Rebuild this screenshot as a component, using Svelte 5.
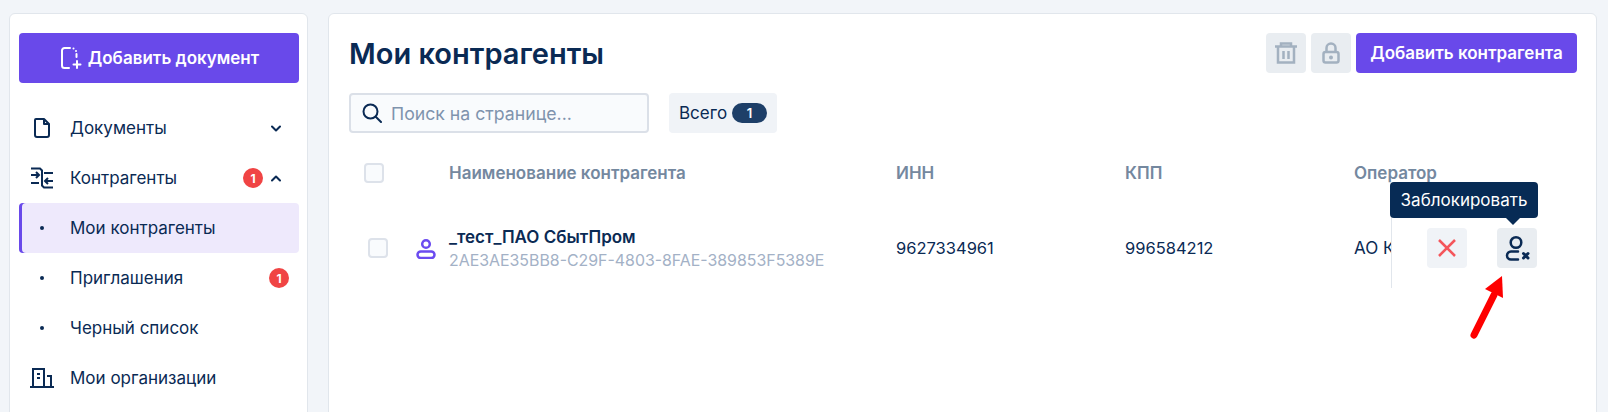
<script>
  let menu = [
    { label: 'Документы', icon: 'doc', chevron: 'down' },
    { label: 'Контрагенты', icon: 'swap', chevron: 'up', badge: 1 },
    { label: 'Мои контрагенты', active: true },
    { label: 'Приглашения', badge: 1 },
    { label: 'Черный список' },
    { label: 'Мои организации', icon: 'building' }
  ];
</script>

<div class="page">
  <aside class="sidebar">
    <button class="add-doc">
      <svg width="24" height="26" viewBox="0 0 24 26" fill="none" stroke="currentColor" stroke-width="2" stroke-linecap="round" stroke-linejoin="round">
        <path d="M10 23H5.500A2.500 2.500 0 0 1 3 20.500V5.500A2.500 2.500 0 0 1 5.500 3H11" />
        <path d="M14.500 3.500h.01M17 6h.01M17.500 9v3" />
        <path d="M18 16v7M14.500 19.500h7" />
      </svg>
      Добавить документ
    </button>
    <nav class="menu">
      {#each menu as item}
        <div class="item" class:active={item.active}>
          <span class="item-icon">
            {#if item.icon === 'doc'}
              <svg width="18" height="22" viewBox="0 0 18 22" fill="none" stroke="#0a2a54" stroke-width="2" stroke-linejoin="round">
                <path d="M3 2h8l5 5v11a2 2 0 0 1-2 2H4a2 2 0 0 1-2-2V3a1 1 0 0 1 1-1z" />
                <path d="M11 2v5h5" />
              </svg>
            {:else if item.icon === 'swap'}
              <svg width="22" height="22" viewBox="0 0 22 22" fill="none" stroke="#0a2a54" stroke-width="2">
                <path d="M0 1.500h9l2 2v15l2 2h9M13 6h9" />
                <path d="M0 8h8M5 5l3 3-3 3M0 16h8" />
                <path d="M22 14h-8M17 11l-3 3 3 3" />
              </svg>
            {:else if item.icon === 'building'}
              <svg width="24" height="22" viewBox="0 0 24 22" fill="none" stroke="#0a2a54" stroke-width="2">
                <path d="M0 20h24M3 20V2h11v18M17 9h4v11" />
                <path d="M7 7h3M7 11h3" />
              </svg>
            {:else}
              <span class="dot"></span>
            {/if}
          </span>
          <span class="item-label">{item.label}</span>
          {#if item.badge}
            <span class="badge">{item.badge}</span>
          {/if}
          {#if item.chevron}
            <svg class="chevron" width="10" height="7" viewBox="0 0 10 7" fill="none" stroke="#0a2a54" stroke-width="2" stroke-linecap="round" stroke-linejoin="round">
              {#if item.chevron === 'down'}
                <path d="M1 1.500l4 4 4-4" />
              {:else}
                <path d="M1 5.500l4-4 4 4" />
              {/if}
            </svg>
          {/if}
        </div>
      {/each}
    </nav>
  </aside>

  <main class="content">
    <header class="top">
      <h1>Мои контрагенты</h1>
      <div class="top-actions">
        <button class="icon-btn">
          <svg width="22" height="22" viewBox="0 0 22 22" fill="none" stroke="#a3b1c0" stroke-width="2.500">
            <path d="M0 4.500h22M6 3.500V1.500h10v2M3 5v15.500h16V5" />
            <path d="M8.500 9v8M13.500 9v8" />
          </svg>
        </button>
        <button class="icon-btn">
          <svg width="18" height="22" viewBox="0 0 18 22" fill="none" stroke="#a3b1c0" stroke-width="2.500">
            <path d="M4.500 10V6a4.500 4.500 0 0 1 9 0v4" />
            <rect x="1.500" y="10" width="15" height="10.500" rx="2" />
            <circle cx="9" cy="15.500" r="2" fill="#a3b1c0" stroke="none" />
          </svg>
        </button>
        <button class="add-partner">Добавить контрагента</button>
      </div>
    </header>

    <div class="filters">
      <label class="search">
        <svg width="20" height="20" viewBox="0 0 20 20" fill="none" stroke="#0a2a54" stroke-width="2" stroke-linecap="round">
          <circle cx="8.500" cy="8.500" r="7" />
          <path d="M14 14l5 5" />
        </svg>
        <input placeholder="Поиск на странице..." />
      </label>
      <div class="total">Всего <span class="pill">1</span></div>
    </div>

    <div class="table">
      <div class="head">
        <span class="cell-check"><span class="checkbox"></span></span>
        <span>Наименование контрагента</span>
        <span>ИНН</span>
        <span>КПП</span>
        <span>Оператор</span>
      </div>
      <div class="row">
        <span class="cell-check row-check">
          <span class="checkbox"></span>
          <svg width="20" height="21" viewBox="0 0 20 21" fill="none" stroke="#6b4bf0" stroke-width="2.500">
            <circle cx="10" cy="6" r="3.800" />
            <rect x="1.500" y="13.500" width="17" height="6.500" rx="3.250" />
          </svg>
        </span>
        <div class="name">
          <strong>_тест_ПАО СбытПром</strong>
          <small>2AE3AE35BB8-C29F-4803-8FAE-389853F5389E</small>
        </div>
        <span class="num">9627334961</span>
        <span class="num">996584212</span>
        <span class="operator">АО Калуга Астрал</span>
        <div class="row-actions">
          <button class="icon-btn small">
            <svg width="20" height="20" viewBox="0 0 20 20" fill="none" stroke="#f4565b" stroke-width="2.500">
              <path d="M2 2l16 16M18 2L2 18" />
            </svg>
          </button>
          <button class="icon-btn small dark">
            <svg width="28" height="26" viewBox="0 0 28 26" fill="none" stroke="#0a2a54" stroke-width="2.500" stroke-linecap="round">
              <circle cx="13" cy="7.500" r="5.300" />
              <path d="M15 16.500H8a4 4 0 0 0 0 8h7" />
              <path d="M20.500 18.500l4.500 4.500M25 18.500l-4.500 4.500" stroke-width="3" />
            </svg>
            <span class="tooltip">Заблокировать</span>
          </button>
        </div>
      </div>
    </div>
  </main>

  <svg class="red-arrow" width="44" height="70" viewBox="0 0 44 70" fill="none">
    <path d="M6 62L26 22" stroke="#fe0000" stroke-width="7" stroke-linecap="round" />
    <path d="M34 3L17 16l18 9z" fill="#fe0000" />
  </svg>
</div>

<style>
  :global(body) {
    margin: 0;
    background: #f2f5f9;
    font-family: Inter, "Noto Sans", sans-serif;
    color: #0a2a54;
  }

  .page {
    position: relative;
    display: flex;
    gap: 20px;
    height: 412px;
    box-sizing: border-box;
    padding: 13px 11px 0 9px;
    overflow: hidden;
  }

  button {
    border: none;
    font-family: inherit;
    padding: 0;
  }

  .sidebar {
    width: 299px;
    height: 420px;
    flex: none;
    box-sizing: border-box;
    background: #fff;
    border: 1px solid #e1e6ec;
    border-radius: 6px;
    padding: 19px 8px 19px 9px;
  }

  .add-doc {
    display: flex;
    align-items: center;
    justify-content: center;
    gap: 5px;
    width: 280px;
    height: 50px;
    background: #6949ea;
    color: #fff;
    border-radius: 4px;
    font-size: 17px;
    font-weight: 600;
  }

  .menu {
    margin-top: 20px;
  }

  .item {
    display: flex;
    align-items: center;
    height: 50px;
    padding: 0 10px 0 11px;
    font-size: 17px;
    border-radius: 4px;
  }

  .item.active {
    background: #eee9fc;
    box-shadow: inset 3px 0 0 #6949ea;
  }

  .item-icon {
    display: flex;
    align-items: center;
    justify-content: center;
    width: 24px;
    margin-right: 16px;
  }

  .dot {
    width: 4px;
    height: 4px;
    background: #0a2a54;
    border-radius: 50%;
  }

  .item-label {
    flex: 1;
  }

  .badge {
    display: flex;
    align-items: center;
    justify-content: center;
    width: 20px;
    height: 20px;
    background: #f04444;
    color: #fff;
    border-radius: 50%;
    font-size: 12px;
    font-weight: 700;
  }

  .chevron {
    margin-left: 8px;
    margin-right: 8px;
  }

  .content {
    flex: 1;
    height: 420px;
    box-sizing: border-box;
    background: #fff;
    border: 1px solid #e1e6ec;
    border-radius: 6px;
    padding: 19px 19px 0 20px;
    min-width: 0;
  }

  .top {
    display: flex;
    align-items: center;
    justify-content: space-between;
    height: 40px;
  }

  h1 {
    margin: 0;
    font-size: 29px;
    font-weight: 600;
  }

  .top-actions {
    display: flex;
    gap: 5px;
  }

  .icon-btn {
    position: relative;
    display: flex;
    align-items: center;
    justify-content: center;
    width: 40px;
    height: 40px;
    background: #e9edf1;
    border-radius: 4px;
  }

  .add-partner {
    width: 221px;
    height: 40px;
    background: #6949ea;
    color: #fff;
    border-radius: 4px;
    font-size: 17px;
    font-weight: 600;
  }

  .filters {
    display: flex;
    gap: 20px;
    margin-top: 20px;
  }

  .search {
    display: flex;
    align-items: center;
    gap: 9px;
    box-sizing: border-box;
    width: 300px;
    height: 40px;
    padding: 0 11px;
    background: #f9fbfd;
    border: 2px solid #dbe0e8;
    border-radius: 4px;
  }

  .search input {
    flex: 1;
    min-width: 0;
    padding: 0;
    border: none;
    outline: none;
    background: transparent;
    font: inherit;
    font-size: 17.7px;
  }

  .search input::placeholder {
    color: #7f93ad;
    opacity: 1;
  }

  .total {
    display: flex;
    align-items: center;
    gap: 5px;
    height: 40px;
    padding: 0 10px;
    background: #f0f3f7;
    border-radius: 4px;
    font-size: 17px;
  }

  .pill {
    width: 35px;
    height: 20px;
    background: #1e3f68;
    color: #fff;
    border-radius: 10px;
    font-size: 13px;
    font-weight: 600;
    text-align: center;
    line-height: 20px;
  }

  .table {
    margin-top: 20px;
  }

  .head,
  .row {
    display: grid;
    grid-template-columns: 100px 447px 229px 229px 1fr;
    align-items: center;
  }

  .head {
    height: 40px;
    color: #74889f;
    font-size: 17px;
    font-weight: 600;
  }

  .row {
    position: relative;
    height: 80px;
    margin-top: 15px;
    font-size: 17px;
  }

  .num {
    font-size: 16.5px;
  }

  .cell-check {
    display: flex;
    align-items: center;
    padding-left: 15px;
  }

  .row-check {
    padding-left: 19px;
    gap: 28px;
  }

  .checkbox {
    box-sizing: border-box;
    width: 20px;
    height: 20px;
    border: 2px solid #dde2ea;
    background: #f9fbfd;
    border-radius: 4px;
  }

  .name {
    display: flex;
    flex-direction: column;
    gap: 2px;
    padding-top: 2px;
  }

  .name strong {
    font-size: 17px;
    font-weight: 600;
    line-height: 22px;
  }

  .name small {
    color: #a3b1c6;
    font-size: 15.9px;
    line-height: 22px;
  }

  .operator {
    white-space: nowrap;
    overflow: hidden;
  }

  .row-actions {
    position: absolute;
    top: 0;
    right: 40px;
    bottom: 0;
    display: flex;
    align-items: center;
    gap: 30px;
    padding-left: 35px;
    background: #fff;
    border-left: 1px solid #e1e6ec;
  }

  .icon-btn.small {
    background: #f0f3f7;
  }

  .icon-btn.dark {
    background: #e9edf1;
  }

  .tooltip {
    position: absolute;
    right: -1px;
    bottom: 50px;
    width: 148px;
    height: 36px;
    line-height: 36px;
    text-align: center;
    background: #072b55;
    color: #fff;
    border-radius: 4px;
    font-size: 17px;
    white-space: nowrap;
  }

  .tooltip::after {
    content: "";
    position: absolute;
    left: 116px;
    bottom: -7px;
    border: 7px solid transparent;
    border-bottom: none;
    border-top-color: #072b55;
  }

  .red-arrow {
    position: absolute;
    left: 1468px;
    top: 273px;
  }
</style>
